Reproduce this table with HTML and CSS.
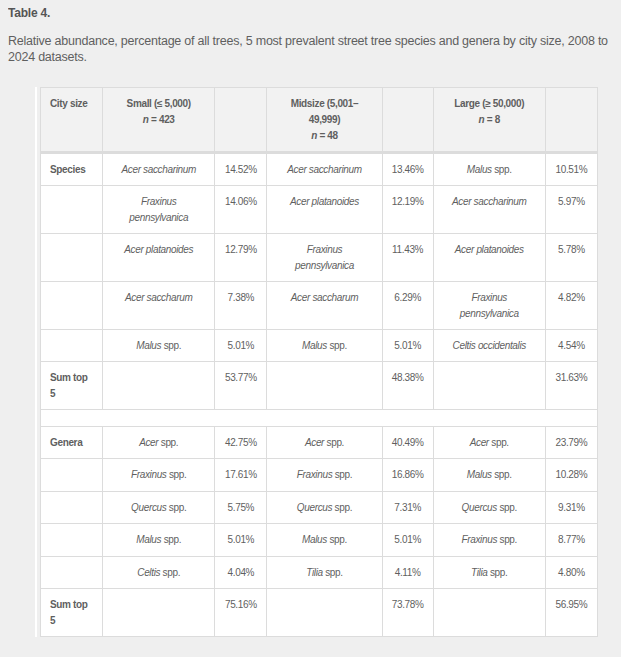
FILE: index.html
```html
<!DOCTYPE html>
<html lang="en">
<head>
<meta charset="utf-8">
<title>Table 4</title>
<link rel="stylesheet" href="styles.css">
</head>
<body>
<div class="caption">
  <p class="label">Table 4.</p>
  <p class="desc">Relative abundance, percentage of all trees, 5 most prevalent street tree species and genera by city size, 2008 to 2024 datasets.</p>
</div>
<div class="wrap">
<table class="data">
  <colgroup>
    <col class="c1"><col class="c2"><col class="c3"><col class="c4"><col class="c5"><col class="c6"><col class="c7">
  </colgroup>
  <thead>
    <tr>
      <th class="first">City size</th>
      <th>Small (≤ 5,000)<br><i>n</i> = 423</th>
      <th></th>
      <th>Midsize (5,001–49,999)<br><i>n</i> = 48</th>
      <th></th>
      <th>Large (≥ 50,000)<br><i>n</i> = 8</th>
      <th></th>
    </tr>
  </thead>
  <tbody>
    <tr>
      <td class="first">Species</td>
      <td><i>Acer saccharinum</i></td><td>14.52%</td>
      <td><i>Acer saccharinum</i></td><td>13.46%</td>
      <td><i>Malus</i> spp.</td><td>10.51%</td>
    </tr>
    <tr>
      <td class="first"></td>
      <td><i>Fraxinus pennsylvanica</i></td><td>14.06%</td>
      <td><i>Acer platanoides</i></td><td>12.19%</td>
      <td><i>Acer saccharinum</i></td><td>5.97%</td>
    </tr>
    <tr>
      <td class="first"></td>
      <td><i>Acer platanoides</i></td><td>12.79%</td>
      <td><i>Fraxinus pennsylvanica</i></td><td>11.43%</td>
      <td><i>Acer platanoides</i></td><td>5.78%</td>
    </tr>
    <tr>
      <td class="first"></td>
      <td><i>Acer saccharum</i></td><td>7.38%</td>
      <td><i>Acer saccharum</i></td><td>6.29%</td>
      <td><i>Fraxinus pennsylvanica</i></td><td>4.82%</td>
    </tr>
    <tr>
      <td class="first"></td>
      <td><i>Malus</i> spp.</td><td>5.01%</td>
      <td><i>Malus</i> spp.</td><td>5.01%</td>
      <td><i>Celtis occidentalis</i></td><td>4.54%</td>
    </tr>
    <tr>
      <td class="first">Sum top 5</td>
      <td></td><td>53.77%</td>
      <td></td><td>48.38%</td>
      <td></td><td>31.63%</td>
    </tr>
    <tr class="blank">
      <td colspan="7"></td>
    </tr>
  </tbody>
  <tbody class="genera">
    <tr>
      <td class="first">Genera</td>
      <td><i>Acer</i> spp.</td><td>42.75%</td>
      <td><i>Acer</i> spp.</td><td>40.49%</td>
      <td><i>Acer</i> spp.</td><td>23.79%</td>
    </tr>
    <tr>
      <td class="first"></td>
      <td><i>Fraxinus</i> spp.</td><td>17.61%</td>
      <td><i>Fraxinus</i> spp.</td><td>16.86%</td>
      <td><i>Malus</i> spp.</td><td>10.28%</td>
    </tr>
    <tr>
      <td class="first"></td>
      <td><i>Quercus</i> spp.</td><td>5.75%</td>
      <td><i>Quercus</i> spp.</td><td>7.31%</td>
      <td><i>Quercus</i> spp.</td><td>9.31%</td>
    </tr>
    <tr>
      <td class="first"></td>
      <td><i>Malus</i> spp.</td><td>5.01%</td>
      <td><i>Malus</i> spp.</td><td>5.01%</td>
      <td><i>Fraxinus</i> spp.</td><td>8.77%</td>
    </tr>
    <tr>
      <td class="first"></td>
      <td><i>Celtis</i> spp.</td><td>4.04%</td>
      <td><i>Tilia</i> spp.</td><td>4.11%</td>
      <td><i>Tilia</i> spp.</td><td>4.80%</td>
    </tr>
    <tr>
      <td class="first">Sum top 5</td>
      <td></td><td>75.16%</td>
      <td></td><td>73.78%</td>
      <td></td><td>56.95%</td>
    </tr>
  </tbody>
</table>
</div>
</body>
</html>
```

FILE: styles.css
```css
html, body {
  background: #efefef;
}
body {
  margin: 8px;
  font-family: "Liberation Sans", Arial, sans-serif;
  color: #5f5f5f;
}
.caption p {
  margin: 0;
}
.caption .label {
  font-weight: bold;
  font-size: 12px;
  letter-spacing: -0.2px;
  line-height: 16px;
  margin-top: -3px;
  color: #555;
}
.caption .desc {
  font-size: 12.5px;
  letter-spacing: -0.23px;
  line-height: 16px;
  margin-top: 12px;
}
.wrap {
  margin: 22px 0 0 27px;
  border-left: 2px solid #fff;
  padding-left: 3px;
  width: 560px;
}
.data {
  border-collapse: collapse;
  table-layout: fixed;
  width: 558px;
  background: #fff;
  font-size: 10px;
  letter-spacing: -0.35px;
  line-height: 16px;
}
.c1 { width: 62px; }
.c2 { width: 112px; }
.c3 { width: 52px; }
.c4 { width: 115px; }
.c5 { width: 51px; }
.c6 { width: 112px; }
.c7 { width: 52px; }
.data th,
.data td {
  border: 1px solid #dcdcdc;
  padding: 8px 9px 7px;
  vertical-align: top;
  text-align: center;
}
.data th {
  background: #f2f2f2;
  font-weight: bold;
  border-bottom: 3px solid #dcdcdc;
}
.data th i {
  font-weight: bold;
}
.data .first {
  text-align: left;
  font-weight: bold;
}
.data .blank td {
  padding: 0;
  height: 16px;
}
.data .genera td {
  padding-bottom: 7.4px;
}
```
